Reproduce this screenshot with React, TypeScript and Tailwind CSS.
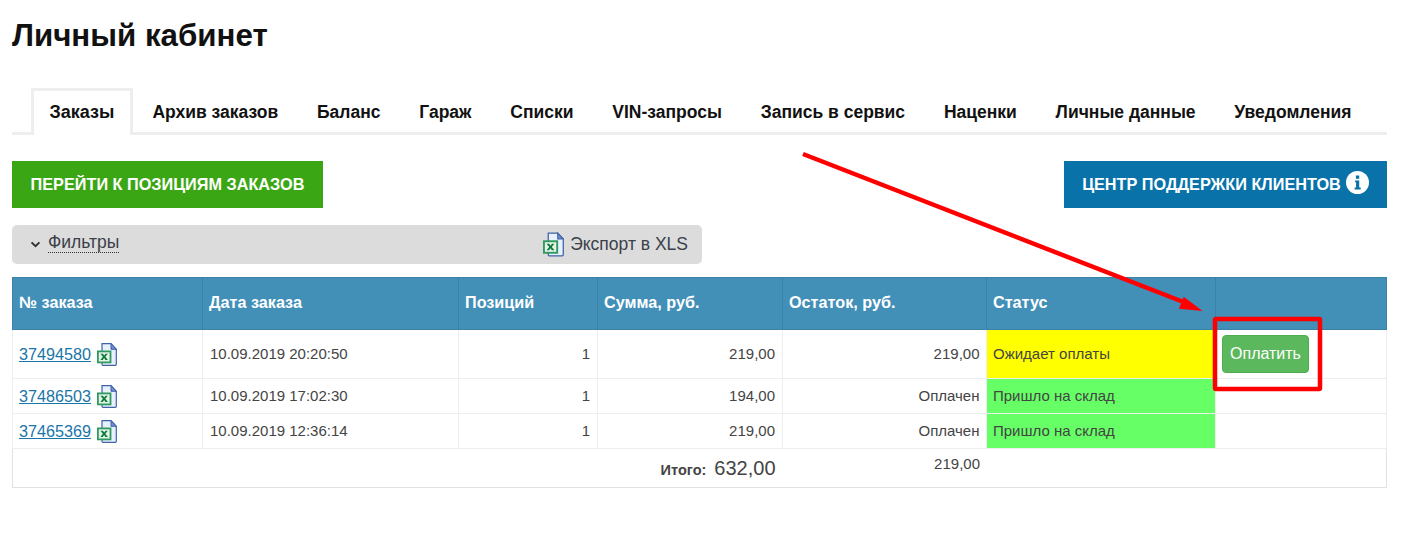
const SANS = "font-['Liberation_Sans',Arial,sans-serif]"

const tabs = ['Архив заказов', 'Баланс', 'Гараж', 'Списки', 'VIN-запросы', 'Запись в сервис', 'Наценки', 'Личные данные', 'Уведомления']

const orders = [
  { id: '37494580', date: '10.09.2019 20:20:50', sum: '219,00', rest: '219,00', status: 'Ожидает оплаты', pay: true },
  { id: '37486503', date: '10.09.2019 17:02:30', sum: '194,00', rest: 'Оплачен', status: 'Пришло на склад', pay: false },
  { id: '37465369', date: '10.09.2019 12:36:14', sum: '219,00', rest: 'Оплачен', status: 'Пришло на склад', pay: false },
]

function XlsIcon({ className }: { className?: string }) {
  return (
    <svg viewBox="0 0 20 23" className={className}>
      <path d="M5 .7h9l5.300 5.600v15a1 1 0 0 1-1 1H6a1 1 0 0 1-1-1z" fill="#e8f0fb" stroke="#3f62a8" strokeWidth="1.200" />
      <path d="M14 .7v5.600h5.300z" fill="#6f8fcf" stroke="#3f62a8" strokeWidth="1" />
      <rect x="0.900" y="8.400" width="12.600" height="11" fill="#e6f3e8" stroke="#2e9a5f" strokeWidth="1.800" />
      <path d="M3.400 10.800h2.500l1.300 1.800 1.300-1.800h2.300l-2.400 3 2.500 3.200h-2.500l-1.300-1.900-1.300 1.900H3.400l2.500-3.200z" fill="#0f7a3c" />
    </svg>
  )
}

function App() {
  return (
    <div className={`relative h-[541px] w-[1419px] overflow-hidden bg-white px-3 pr-8 text-[#333] ${SANS}`}>
      <h1 className="pt-[17px] text-[31.300px] leading-[38px] font-bold text-[#111]">Личный кабинет</h1>

      {/* tabs */}
      <div className="mt-[33px] flex h-[47px] items-stretch border-b-[3px] border-[#eeeeee] pl-[19px] text-[17.500px] font-bold text-[#111]">
        <div className="-mb-[3px] flex h-[47px] w-[102px] items-center justify-center border-[3px] border-b-0 border-[#eeeeee] bg-white pb-[2px] text-[18px]">Заказы</div>
        {tabs.map((t) => (
          <div key={t} className="flex items-center px-[19.400px] pt-[5px]">{t}</div>
        ))}
      </div>

      {/* buttons */}
      <div className="mt-[26px] flex justify-between">
        <button className="flex h-[47px] w-[311px] items-center justify-center bg-[#3aa613] text-[16.250px] font-bold text-white">ПЕРЕЙТИ К ПОЗИЦИЯМ ЗАКАЗОВ</button>
        <button className="flex h-[47px] w-[323px] items-center justify-center gap-[5px] bg-[#0872a9] text-[16.250px] font-bold text-white">
          ЦЕНТР ПОДДЕРЖКИ КЛИЕНТОВ
          <svg viewBox="0 0 24 24" className="-mt-1 h-[23px] w-[23px]">
            <circle cx="12" cy="12" r="12" fill="#fff" />
            <path d="M9.500 9.800h4.300v7.400h1.500v2H9v-2h1.500v-5.400H9.500zM10.300 4.800h3.500v3.200h-3.500z" fill="#0872a9" />
          </svg>
        </button>
      </div>

      {/* filters */}
      <div className="mt-[17px] flex h-[39px] w-[690px] items-center justify-between rounded-[5px] bg-[#dcdcdc] pr-[14px] pl-[18px] text-[17.500px] text-[#3a4148]">
        <div className="-mt-[3px] flex items-center gap-[7px]">
          <svg viewBox="0 0 12 8" className="mt-[2px] h-[7px] w-[11px]">
            <path d="M1.500 1.500 6 6l4.500-4.500" fill="none" stroke="#2f3338" strokeWidth="2.200" />
          </svg>
          <span className="border-b border-dotted border-[#333] leading-[19px]">Фильтры</span>
        </div>
        <div className="flex items-center gap-[6px]">
          <XlsIcon className="h-[25px] w-[21px]" />
          <span>Экспорт в XLS</span>
        </div>
      </div>

      {/* orders */}
      <table className="mt-[13px] w-[1374px] table-fixed border-collapse text-[15px] text-[#444]">
        <colgroup>
          <col className="w-[190px]" />
          <col className="w-[256px]" />
          <col className="w-[139px]" />
          <col className="w-[185px]" />
          <col className="w-[204px]" />
          <col className="w-[229px]" />
          <col className="w-[171px]" />
        </colgroup>
        <thead>
          <tr className="h-[52px] bg-[#428fb8] text-left text-[16.200px] font-bold text-white">
            {['№ заказа', 'Дата заказа', 'Позиций', 'Сумма, руб.', 'Остаток, руб.', 'Статус', ''].map((h, i) => (
              <th key={i} className="border border-[#3a82a8] px-[6px] pb-[2px] font-bold">{h}</th>
            ))}
          </tr>
        </thead>
        <tbody>
          {orders.map((o) => (
            <tr key={o.id} className={o.pay ? 'h-[49px]' : 'h-[35px]'}>
              <td className="border border-[#eeeeee] px-[6px]">
                <div className="flex items-center gap-[6px]">
                  <a href="#" className="text-[16.200px] text-[#1a75a8] underline">{o.id}</a>
                  <XlsIcon className="mt-[1px] h-[23px] w-[20px]" />
                </div>
              </td>
              <td className="border border-[#eeeeee] px-[7px]">{o.date}</td>
              <td className="border border-[#eeeeee] px-[7px] text-right">1</td>
              <td className="border border-[#eeeeee] px-[7px] text-right">{o.sum}</td>
              <td className="border border-[#eeeeee] px-[6.500px] text-right">{o.rest}</td>
              <td className={`border border-[#eeeeee] px-[6px] ${o.pay ? 'bg-[#ffff00]' : 'bg-[#66ff66]'}`}>{o.status}</td>
              <td className="border border-[#eeeeee] px-[6px]">
                {o.pay && (
                  <button className="flex h-[38px] w-[87px] items-center justify-center rounded-[4px] border border-[#4cae4c] bg-[#5cb85c] text-[16px] text-white">Оплатить</button>
                )}
              </td>
            </tr>
          ))}
          <tr className="h-[39px]">
            <td colSpan={4} className="border border-[#e2e2e2] border-r-0 px-[7px] text-right align-middle">
              <span className="mr-[8px] text-[14.500px] font-bold">Итого:</span>
              <span className="text-[20px]">632,00</span>
            </td>
            <td className="border-y border-[#e2e2e2] px-[6.500px] pb-[8px] text-right">219,00</td>
            <td colSpan={2} className="border border-[#e2e2e2] border-l-0"></td>
          </tr>
        </tbody>
      </table>

      {/* annotation drawn over the page */}
      <svg viewBox="0 0 1419 541" className="pointer-events-none absolute inset-0 h-[541px] w-[1419px]">
        <path d="M803 154 1186 303" fill="none" stroke="#ff0000" strokeWidth="4.500" />
        <path d="M1200 310 1180 308 1184 298z" fill="#ff0000" stroke="#ff0000" strokeWidth="1.500" />
        <rect x="1215" y="319" width="105" height="70" fill="none" stroke="#ff0000" strokeWidth="4.500" rx="1" />
      </svg>
    </div>
  )
}

export default App
